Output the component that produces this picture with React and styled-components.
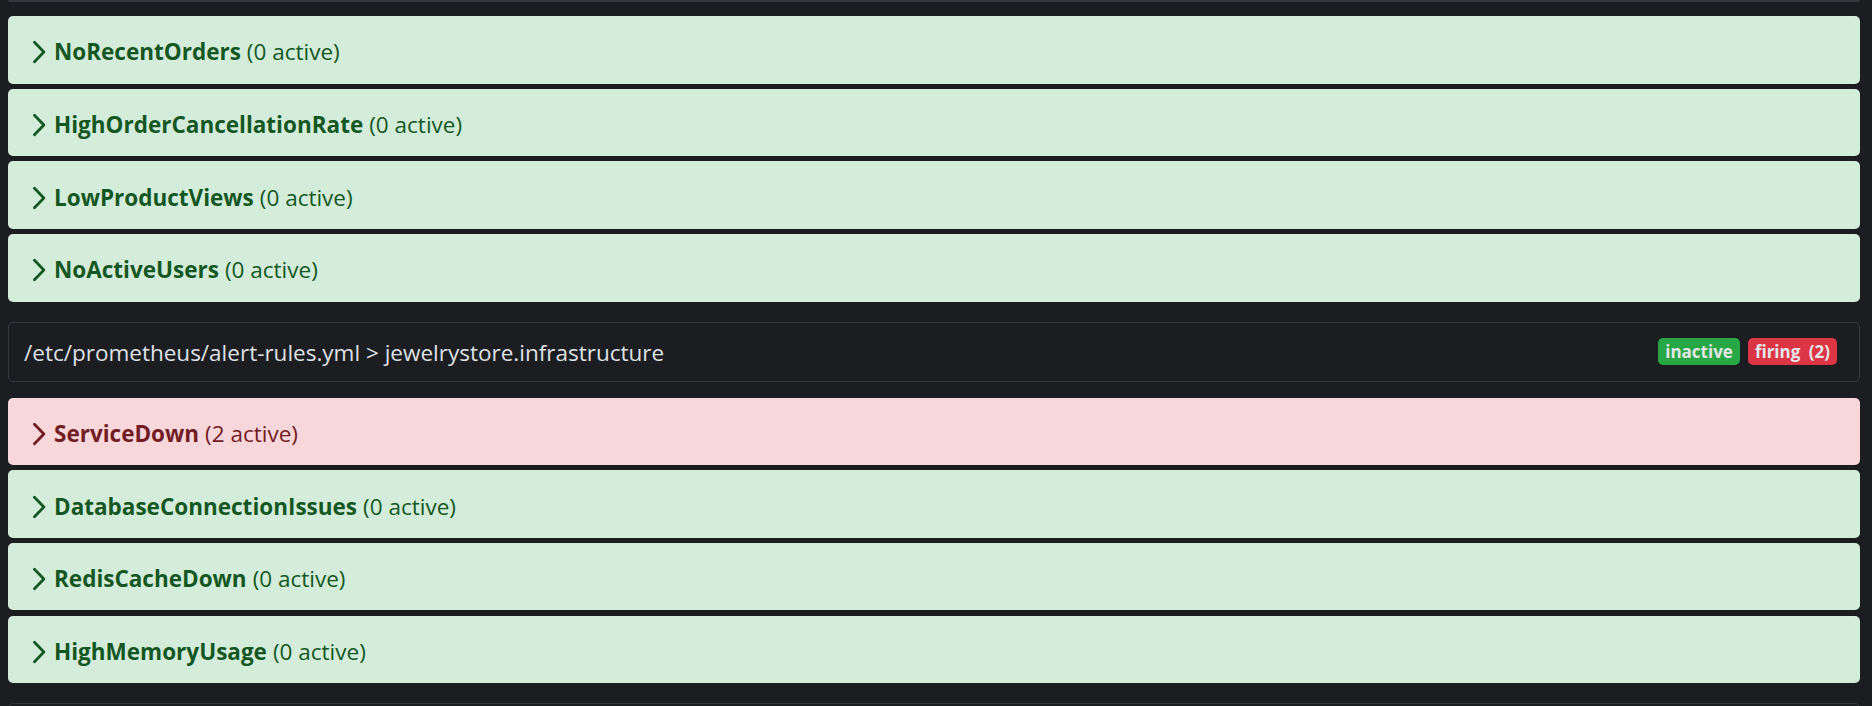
import React from 'react'
import styled, { createGlobalStyle } from 'styled-components'

const GlobalStyle = createGlobalStyle`
  html, body {
    margin: 0;
    padding: 0;
    height: 706px;
    overflow: hidden;
    background: #1b1d21;
    font-family: "Open Sans", "Noto Sans", sans-serif;
  }
`

const Page = styled.div`
  padding: 0 12px 0 8px;
`

// bottom of the group above, scrolled mostly out of view
const PrevEdge = styled.div`
  height: 2px;
  background: #34373c;
  border-radius: 0 0 5px 5px;
  margin-bottom: 14px;
`

const Group = styled.section`
  margin-bottom: 20px;
`

const GroupHeader = styled.div`
  height: 60px;
  box-sizing: border-box;
  display: flex;
  align-items: center;
  justify-content: space-between;
  padding: 0 22px 0 15px;
  border: 1px solid #35383d;
  border-radius: 5px;
  margin-bottom: 16px;
`

const GroupTitle = styled.span`
  color: #dfe1e4;
  font-size: 22.5px;
  padding-top: 2px;
`

const Badges = styled.div`
  display: flex;
  gap: 8px;
`

const Badge = styled.span`
  height: 27px;
  box-sizing: border-box;
  display: inline-flex;
  align-items: center;
  padding: 0 7px;
  border-radius: 5px;
  font-size: 17px;
  font-weight: 700;
  word-spacing: 4px;
  color: #e4e6e8;
  background: ${p => (p.kind === 'firing' ? '#dc3545' : '#28a745')};
`

const Rule = styled.div`
  height: 67.5px;
  box-sizing: border-box;
  display: flex;
  align-items: center;
  padding: 4px 0 0 18px;
  border-radius: 5px;
  margin-bottom: 5.2px;
  font-size: 22.5px;
  background: ${p => (p.firing ? '#f8d7da' : '#d4edda')};
  color: ${p => (p.firing ? '#721c24' : '#155724')};
`

const Chevron = styled.svg`
  width: 27px;
  height: 27px;
  flex: none;
  margin-right: 1px;
`

const Name = styled.strong`
  font-weight: 700;
  margin-right: 6px;
`

const Count = styled.span`
  font-weight: 400;
`

const groups = [
  {
    rules: [
      ['NoRecentOrders', 0],
      ['HighOrderCancellationRate', 0],
      ['LowProductViews', 0],
      ['NoActiveUsers', 0],
    ],
  },
  {
    title: '/etc/prometheus/alert-rules.yml > jewelrystore.infrastructure',
    firing: 2,
    rules: [
      ['ServiceDown', 2],
      ['DatabaseConnectionIssues', 0],
      ['RedisCacheDown', 0],
      ['HighMemoryUsage', 0],
    ],
  },
]

const RuleRow = ({ name, active }) => (
  <Rule firing={active > 0}>
    <Chevron viewBox="0 0 16 16">
      <path
        d="M5 2.5 L10.6 8.3 L5 14.1"
        fill="none"
        stroke="currentColor"
        strokeWidth="1.65"
        strokeLinecap="round"
        strokeLinejoin="round"
      />
    </Chevron>
    <Name>{name}</Name>
    <Count>({active} active)</Count>
  </Rule>
)

export default function App () {
  return (
    <Page>
      <GlobalStyle />
      <PrevEdge />
      {groups.map((g, i) => (
        <Group key={i}>
          {g.title && (
            <GroupHeader>
              <GroupTitle>{g.title}</GroupTitle>
              <Badges>
                <Badge>inactive</Badge>
                <Badge kind="firing">firing ({g.firing})</Badge>
              </Badges>
            </GroupHeader>
          )}
          {g.rules.map(([name, active]) => (
            <RuleRow key={name} name={name} active={active} />
          ))}
        </Group>
      ))}
      {/* next group header, only its top edge is on screen */}
      <GroupHeader />
    </Page>
  )
}
